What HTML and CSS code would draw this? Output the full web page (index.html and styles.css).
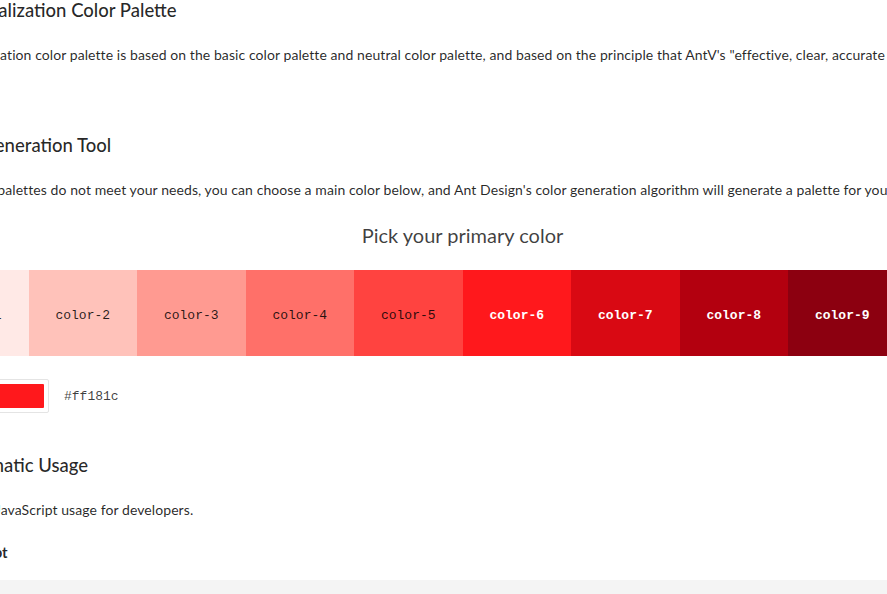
FILE: index.html
```html
<!DOCTYPE html>
<html>
<head>
<meta charset="utf-8">
<link rel="stylesheet" href="styles.css">
</head>
<body>
<div class="content">
  <h3 class="h3 first">Data Visualization Color Palette</h3>
  <p class="para">Data Visualization color palette is based on the basic color palette and neutral color palette, and based on the principle that AntV's "effective, clear, accurate and beautiful" design values, the data visualization color palette has been extended.</p>

  <h3 class="h3 second">Palette Generation Tool</h3>
  <p class="para">If the above palettes do not meet your needs, you can choose a main color below, and Ant Design's color generation algorithm will generate a palette for you.</p>

  <div class="picker-title">Pick your primary color</div>
  <div class="palette">
    <div class="cell c1">color-1</div>
    <div class="cell c2">color-2</div>
    <div class="cell c3">color-3</div>
    <div class="cell c4">color-4</div>
    <div class="cell c5">color-5</div>
    <div class="cell c6 dark">color-6</div>
    <div class="cell c7 dark">color-7</div>
    <div class="cell c8 dark">color-8</div>
    <div class="cell c9 dark">color-9</div>
    <div class="cell c10 dark">color-10</div>
  </div>
  <div class="picker-row">
    <div class="swatch"><div class="swatch-inner"></div></div>
    <span class="hex">#ff181c</span>
  </div>

  <h3 class="h3 third">Programmatic Usage</h3>
  <p class="para">We provide JavaScript usage for developers.</p>
  <h4 class="h4">JavaScript</h4>
  <pre class="code"></pre>
</div>
</body>
</html>
```
FILE: styles.css
```css
html, body {
  margin: 0;
  padding: 0;
  overflow: hidden;
  background: #fff;
}
body {
  width: 887px;
  height: 594px;
  font-family: Lato, "Noto Sans", sans-serif;
  color: rgba(0, 0, 0, 0.85);
}
.content {
  width: 1085px;
  margin-left: -80px;
  display: flex;
  flex-direction: column;
}
.h3 {
  margin: 0;
  font-size: 18.5px;
  line-height: 20px;
  font-weight: 500;
  color: rgba(0, 0, 0, 0.85);
  white-space: nowrap;
}
.first { margin-top: 0; }
.second { margin-top: 69px; }
.third { margin-top: 42px; }
.para {
  margin: 24px 0 0;
  font-size: 14px;
  line-height: 22px;
  letter-spacing: 0.08px;
  color: rgba(0, 0, 0, 0.85);
  white-space: nowrap;
}
.picker-title {
  margin-top: 20px;
  font-size: 20px;
  line-height: 28px;
  text-align: center;
  color: rgba(0, 0, 0, 0.75);
}
.palette {
  margin-top: 21px;
  display: flex;
  height: 86px;
}
.cell {
  flex: 1 1 0;
  display: flex;
  align-items: center;
  justify-content: center;
  padding-top: 5px;
  box-sizing: border-box;
  font-family: "Liberation Mono", "DejaVu Sans Mono", monospace;
  font-size: 13px;
  color: rgba(0, 0, 0, 0.85);
}
.cell.dark {
  color: #fff;
  font-weight: bold;
}
.c1 { background: #ffe9e6; }
.c2 { background: #ffc2ba; }
.c3 { background: #ff9a91; }
.c4 { background: #ff7069; }
.c5 { background: #ff4340; }
.c6 { background: #ff181c; }
.c7 { background: #d90913; }
.c8 { background: #b3000f; }
.c9 { background: #8c0010; }
.c10 { background: #66000f; }
.picker-row {
  margin-top: 23px;
  display: flex;
  align-items: center;
  gap: 15px;
}
.swatch {
  width: 119px;
  height: 24px;
  padding: 4px;
  border: 1px solid #e4e4e4;
  border-radius: 2px;
  background: #fff;
}
.swatch-inner {
  height: 100%;
  background: #ff181c;
  border-radius: 1px;
}
.hex {
  font-family: "Liberation Mono", "DejaVu Sans Mono", monospace;
  font-size: 13px;
  color: rgba(0, 0, 0, 0.75);
}
.h4 {
  margin: 20px 0 0 20px;
  font-size: 15px;
  line-height: 22px;
  font-weight: 700;
  white-space: nowrap;
}
.code {
  margin: 17px 0 0;
  height: 120px;
  background: #f4f4f4;
}
```
